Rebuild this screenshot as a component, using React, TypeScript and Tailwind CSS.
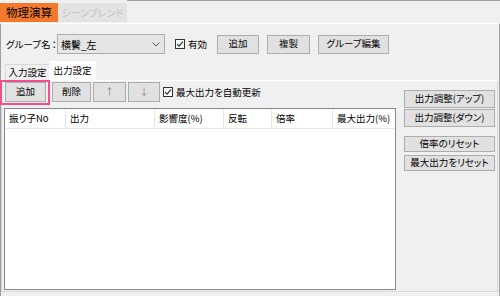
import React from "react";

const btn =
  "flex items-center justify-center bg-[#e1e1e1] border border-[#adadad] text-black leading-none whitespace-nowrap";

function Check() {
  return (
    <svg width="10" height="10" viewBox="0 0 10 10" className="shrink-0">
      <rect x="0.5" y="0.5" width="9" height="9" fill="#fff" stroke="#333" />
      <path d="M2 5 L4 7.2 L8 2.6" fill="none" stroke="#222" strokeWidth="1.1" />
    </svg>
  );
}

export default function App() {
  const cols: [string, number][] = [
    ["振り子No", 61],
    ["出力", 89],
    ["影響度(%)", 69],
    ["反転", 48],
    ["倍率", 61],
    ["最大出力(%)", 62],
  ];
  return (
    <div className="w-[500px] h-[296px] bg-[#f0f0f0] overflow-hidden relative font-['Noto_Sans_CJK_JP',sans-serif] [font-feature-settings:'palt'] text-[9.5px] text-black">
      {/* top tab strip */}
      <div className="h-[23px] flex pt-[3px]">
        <div className="w-[58px] h-[19px] bg-[#f5792b] flex items-center justify-center text-[11.5px] text-black whitespace-nowrap">
          物理演算
        </div>
        <div className="w-[69px] h-[19px] bg-[#e3e3e3] flex items-center justify-center text-[10px] text-[#c3c3c3] whitespace-nowrap">
          シーンブレンド
        </div>
        <div className="flex-1 -mt-[3px] border-t border-[#a0a0a0]" />
      </div>
      {/* frame */}
      <div className="h-[273px] border-t border-white border-l border-r border-l-[#a0a0a0] border-r-[#a0a0a0] flex flex-col">
        {/* group row */}
        <div className="mt-[10px] h-[20px] flex items-center pl-[5px]">
          <span className="w-[51px] shrink-0 whitespace-nowrap">
            グループ名<span className="[font-feature-settings:normal] -ml-[1px]">：</span>
          </span>
          <div className="w-[108px] h-[20px] bg-[#e5e5e5] border border-[#adadad] flex items-center pl-[3px] pr-[4px]">
            <span className="flex-1 text-[10px]">横鬢_左</span>
            <svg width="8" height="5" viewBox="0 0 8 5">
              <path d="M0.5 0.5 L4 4 L7.5 0.5" fill="none" stroke="#555" strokeWidth="1" />
            </svg>
          </div>
          <div className="ml-[10px] flex items-center gap-[3px]">
            <Check />
            <span>有効</span>
          </div>
          <div className={`${btn} ml-[10px] w-[42px] h-[19px]`}>追加</div>
          <div className={`${btn} ml-[8px] w-[43px] h-[19px]`}>複製</div>
          <div className={`${btn} ml-[8px] w-[71px] h-[19px]`}>グループ編集</div>
        </div>
        {/* sub tabs */}
        <div className="mt-[7px] h-[19px] flex items-end pl-[4px]">
          <div className="w-[44px] h-[16px] flex items-center justify-center border-t border-l border-[#d9d9d9] whitespace-nowrap">
            入力設定
          </div>
          <div className="w-[47px] h-[19px] bg-white flex items-center justify-center whitespace-nowrap">
            出力設定
          </div>
        </div>
        {/* tab panel */}
        <div className="relative h-[212px] border-t border-white border-l border-l-[#d0d0d0] border-b border-b-[#d9d9d9] border-r border-r-[#d9d9d9] mr-[1px] flex">
          <div className="pl-[2px] flex flex-col">
            <div className="mt-[1px] h-[20px] flex items-center">
              <div className={`${btn} ml-[1px] w-[41px] h-[20px]`}>追加</div>
              <div className={`${btn} ml-[6px] w-[39px] h-[20px]`}>削除</div>
              <div className={`${btn} ml-[2px] w-[33px] h-[20px] !text-[#666] font-light`}>↑</div>
              <div className={`${btn} ml-[2px] w-[32px] h-[20px] !text-[#666] font-light`}>↓</div>
              <div className="ml-[3px] flex items-center gap-[3px] whitespace-nowrap">
                <Check />
                <span>最大出力を自動更新</span>
              </div>
            </div>
            <div className="mt-[6px] w-[392px] h-[182px] bg-white border border-[#828790]">
              <div className="h-[20px] flex border-b border-[#e5e5e5]">
                {cols.map(([c, w], i) => (
                  <div
                    key={c}
                    style={{ width: w }}
                    className={`h-full flex items-center pl-[4px] whitespace-nowrap ${i < cols.length - 1 ? "border-r border-[#e5e5e5]" : ""}`}
                  >
                    {c}
                  </div>
                ))}
              </div>
            </div>
          </div>
          <div className="ml-[8px] pt-[9px] flex flex-col w-[91px]">
            <div className={`${btn} h-[18px]`}>出力調整(アップ)</div>
            <div className={`${btn} h-[18px] mt-[1px]`}>出力調整(ダウン)</div>
            <div className={`${btn} h-[16px] mt-[9px]`}>倍率のリセット</div>
            <div className={`${btn} h-[16px] mt-[3px]`}>最大出力をリセット</div>
          </div>
          {/* highlight annotation */}
          <div className="absolute left-[-2px] top-[-1px] w-[50px] h-[25px] border-2 border-[#f0508c] pointer-events-none" />
        </div>
      </div>
    </div>
  );
}
